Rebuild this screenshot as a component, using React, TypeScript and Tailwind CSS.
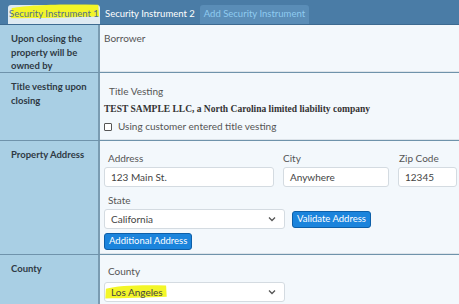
import React from "react";

const font = { fontFamily: 'Lato, "Liberation Sans", sans-serif' };

function Highlight({ className }: { className: string }) {
  return (
    <svg className={`absolute pointer-events-none ${className}`} viewBox="0 0 100 20" preserveAspectRatio="none">
      <path d="M3 6 C 20 2, 60 1, 97 2 L 98 16 C 70 17, 30 18, 2 18 Z" fill="#f2f51c" opacity="0.95" />
    </svg>
  );
}

function Input({ value, className }: { value: string; className: string }) {
  return (
    <div className={`h-[20px] bg-white border border-[#d4dbe1] rounded-[3px] px-[6px] flex items-center text-[10px] text-[#444] ${className}`}>
      {value}
    </div>
  );
}

function Select({ value, highlight }: { value: string; highlight?: boolean }) {
  return (
    <div className="relative w-[181px] h-[20px] bg-white border border-[#d4dbe1] rounded-[3px] pl-[6px] pr-[6px] flex items-center justify-between text-[10px] text-[#444]">
      {highlight && <Highlight className="left-[-1px] top-[1px] w-[64px] h-[16px]" />}
      <span className="relative">{value}</span>
      <svg width="8" height="6" viewBox="0 0 8 6" className="mr-[2px]">
        <path d="M1 1.5 L4 4.5 L7 1.5" stroke="#555" strokeWidth="1.3" fill="none" />
      </svg>
    </div>
  );
}

function Button({ children }: { children: React.ReactNode }) {
  return (
    <div className="h-[17px] px-[4px] flex items-center bg-[#1b84dc] border border-[#0d5fa8] rounded-[3px] text-white text-[9.5px] whitespace-nowrap">
      {children}
    </div>
  );
}

function Row({ label, children, className }: { label: React.ReactNode; children: React.ReactNode; className: string }) {
  return (
    <div className={`flex border-b border-[#6f93ab] ${className}`}>
      <div className="w-[100px] shrink-0 bg-[#a9cfe4] border-r-[2px] border-[#7a9cb2] pl-[11px] pr-[2px] pt-[7px] text-[9.5px] font-bold leading-[13.5px] text-[#2f3a44] whitespace-nowrap">
        {label}
      </div>
      <div className="flex-1 bg-[#f3f8fc] pl-[4px] pr-[6px] border-b border-[#dde4ea]">{children}</div>
    </div>
  );
}

export default function App() {
  return (
    <div className="w-[459px] h-[304px] overflow-hidden bg-[#f3f8fc]" style={font}>
      {/* Tabs */}
      <div className="h-[25px] bg-[#4a7ca6] border-b border-[#3d6a90] flex items-end pl-[8px] gap-[2px] whitespace-nowrap">
        <div className="relative h-[19px] w-[92px] bg-[#dfeaf2] rounded-t-[3px] flex items-center justify-center text-[9.5px] text-[#52708a]">
          <Highlight className="left-[1px] top-[-2px] w-[92px] h-[17px]" />
          <span className="relative">Security Instrument 1</span>
        </div>
        <div className="h-[19px] px-[3px] flex items-center text-[9.5px] text-white">Security Instrument 2</div>
        <div className="h-[19px] px-[4px] bg-[#5a8db7] rounded-t-[3px] flex items-center text-[9.5px] text-[#8fcbf0]">
          Add Security Instrument
        </div>
      </div>

      <Row className="h-[48px]" label={<>Upon closing the<br />property will be<br />owned by</>}>
        <div className="pt-[6px] text-[10px] text-[#555]">Borrower</div>
      </Row>

      <Row className="h-[68px]" label={<>Title vesting upon<br />closing</>}>
        <div className="pt-[11px] pl-[5px] text-[10px] text-[#555]">Title Vesting</div>
        <div
          className="pt-[3px] text-[9.5px] font-bold text-[#333] whitespace-nowrap"
          style={{ fontFamily: '"Liberation Serif", "Times New Roman", serif' }}
        >
          TEST SAMPLE LLC, a North Carolina limited liability company
        </div>
        <div className="pt-[3px] flex items-center gap-[6px] text-[10px] text-[#555]">
          <div className="w-[8px] h-[8px] border border-[#555] rounded-[1px] bg-white" />
          <span>Using customer entered title vesting</span>
        </div>
      </Row>

      <Row className="h-[114px]" label="Property Address">
        <div className="flex gap-[9px] pt-[10px]">
          <div>
            <div className="pl-[4px] text-[10px] text-[#555] leading-[15px]">Address</div>
            <Input value="123 Main St." className="w-[170px] mt-[1px]" />
          </div>
          <div>
            <div className="text-[10px] text-[#555] leading-[15px]">City</div>
            <Input value="Anywhere" className="w-[106px] mt-[1px]" />
          </div>
          <div>
            <div className="pl-[1px] text-[10px] text-[#555] leading-[15px]">Zip Code</div>
            <Input value="12345" className="w-[59px] mt-[1px]" />
          </div>
        </div>
        <div className="pl-[4px] pt-[6px] text-[10px] text-[#555] leading-[15px]">State</div>
        <div className="flex items-center gap-[7px] mt-[1px]">
          <Select value="California" />
          <Button>Validate Address</Button>
        </div>
        <div className="flex mt-[4px]">
          <Button>Additional Address</Button>
        </div>
      </Row>

      <div className="flex h-[60px]">
        <div className="w-[100px] shrink-0 bg-[#a9cfe4] border-r-[2px] border-[#7a9cb2] pl-[11px] pt-[7px] text-[9.5px] font-bold text-[#2f3a44]">
          County
        </div>
        <div className="flex-1 bg-[#f3f8fc] pl-[4px]">
          <div className="pl-[4px] pt-[9px] text-[10px] text-[#555] leading-[15px]">County</div>
          <div className="mt-[3px]">
            <Select value="Los Angeles" highlight />
          </div>
          <div className="pt-[2px] text-[9px] text-[#2a4a70] whitespace-nowrap">
            Changes to the county here do not update the county on the address of the property record
          </div>
        </div>
      </div>
    </div>
  );
}
